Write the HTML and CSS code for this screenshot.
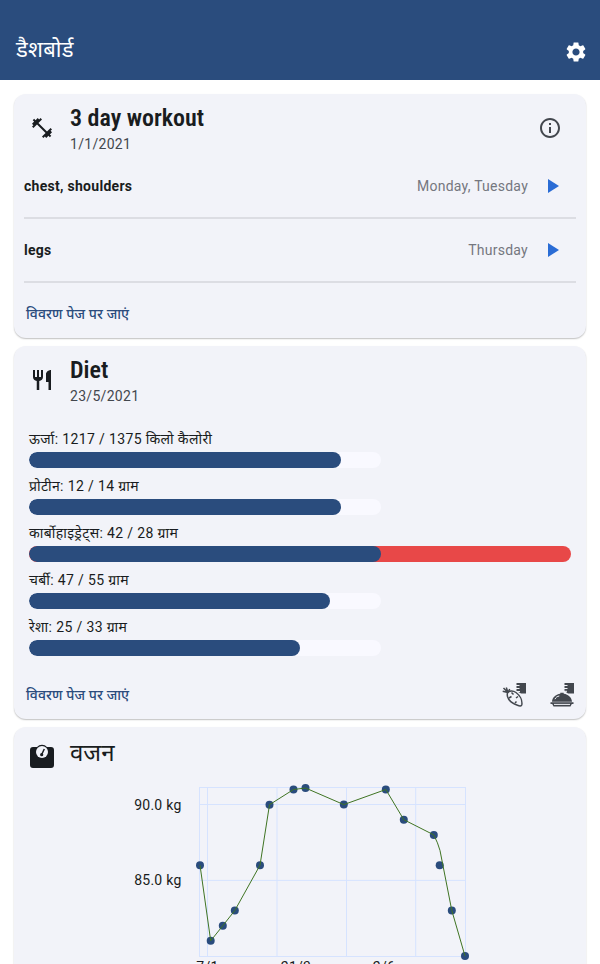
FILE: index.html
```html
<!DOCTYPE html>
<html lang="hi">
<head>
<meta charset="utf-8">
<title>डैशबोर्ड</title>
<link rel="stylesheet" href="styles.css">
</head>
<body>
<header class="appbar">
  <h1>डैशबोर्ड</h1>
  <svg class="icon" viewBox="0 0 24 24"><path d="M19.14 12.94c.04-.3.06-.61.06-.94 0-.32-.02-.64-.07-.94l2.03-1.58c.18-.14.23-.41.12-.61l-1.92-3.32c-.12-.22-.37-.29-.59-.22l-2.39.96c-.5-.38-1.03-.7-1.62-.94l-.36-2.54c-.04-.24-.24-.41-.48-.41h-3.84c-.24 0-.43.17-.47.41l-.36 2.54c-.59.24-1.13.57-1.62.94l-2.39-.96c-.22-.08-.47 0-.59.22L2.74 8.87c-.12.21-.08.47.12.61l2.03 1.58c-.05.3-.09.63-.09.94s.02.64.07.94l-2.03 1.58c-.18.14-.23.41-.12.61l1.92 3.32c.12.22.37.29.59.22l2.39-.96c.5.38 1.03.7 1.62.94l.36 2.54c.05.24.24.41.48.41h3.84c.24 0 .44-.17.47-.41l.36-2.54c.59-.24 1.13-.56 1.62-.94l2.39.96c.22.08.47 0 .59-.22l1.92-3.32c.12-.22.07-.47-.12-.61l-2.01-1.58zM12 15.6c-1.98 0-3.6-1.62-3.6-3.6s1.62-3.6 3.6-3.6 3.6 1.62 3.6 3.6-1.62 3.6-3.6 3.6z"/></svg>
</header>
<main class="cards">
  <section class="card workout">
    <div class="card-head">
      <svg class="icon" viewBox="0 0 24 24"><path d="M20.57 14.86L22 13.43 20.57 12 17 15.57 8.43 7 12 3.43 10.57 2 9.14 3.43 7.71 2 5.57 4.14 4.14 2.71 2.71 4.14l1.43 1.43L2 7.71l1.43 1.43L2 10.57 3.43 12 7 8.43 15.57 17 12 20.57 13.43 22l1.43-1.43L16.29 22l2.14-2.14 1.43 1.43 1.43-1.43-1.43-1.43L22 16.29z"/></svg>
      <div class="titles"><h2>3 day workout</h2><p>1/1/2021</p></div>
      <svg class="icon info" viewBox="0 0 24 24"><path d="M11 7h2v2h-2zm0 4h2v6h-2zm1-9C6.48 2 2 6.48 2 12s4.48 10 10 10 10-4.48 10-10S17.52 2 12 2zm0 18c-4.41 0-8-3.59-8-8s3.59-8 8-8 8 3.59 8 8-3.59 8-8 8z"/></svg>
    </div>
    <div class="day"><b>chest, shoulders</b><span>Monday, Tuesday</span><svg class="icon play" viewBox="0 0 24 24"><path d="M8 5v14l11-7z"/></svg></div>
    <div class="day"><b>legs</b><span>Thursday</span><svg class="icon play" viewBox="0 0 24 24"><path d="M8 5v14l11-7z"/></svg></div>
    <div class="actions"><a>विवरण पेज पर जाएं</a></div>
  </section>

  <section class="card diet">
    <div class="card-head">
      <svg class="icon" viewBox="0 0 24 24"><path d="M11 9H9V2H7v7H5V2H3v7c0 2.12 1.66 3.84 3.75 3.97V22h2.5v-9.03C11.34 12.84 13 11.12 13 9V2h-2v7zm5-3v8h2.5v8H21V2c-2.76 0-5 2.24-5 4z"/></svg>
      <div class="titles"><h2>Diet</h2><p>23/5/2021</p></div>
    </div>
    <div class="gauges">
      <div class="gauge"><p>ऊर्जा: 1217 / 1375 किलो कैलोरी</p><div class="track"><div class="fill" style="width:311.5px"></div></div></div>
      <div class="gauge"><p>प्रोटीन: 12 / 14 ग्राम</p><div class="track"><div class="fill" style="width:311.5px"></div></div></div>
      <div class="gauge"><p>कार्बोहाइड्रेट्स: 42 / 28 ग्राम</p><div class="track over"><div class="fill" style="width:352px"></div></div></div>
      <div class="gauge"><p>चर्बी: 47 / 55 ग्राम</p><div class="track"><div class="fill" style="width:301px"></div></div></div>
      <div class="gauge"><p>रेशा: 25 / 33 ग्राम</p><div class="track"><div class="fill" style="width:270.5px"></div></div></div>
    </div>
    <div class="actions">
      <a>विवरण पेज पर जाएं</a>
      <svg class="icon food" viewBox="0 0 24 24">
        <path class="solid" d="M14.500 0H24v10.500h-5L14.500 8z"/>
        <path class="gap" d="M14 2.500h3.500M14 5.500h3.500M14 8.500h4"/>
        <path class="outline base" d="M5.500 10C7 7.500 11 7.500 14 9.500c4 3 6.500 8 5.800 12.200-.4 1.600-2.300 1.400-4.300.6C10 20.500 6.500 17 5.500 13.500c-.3-1.500-.4-2.500 0-3.500z"/>
        <path class="outline" d="M6 9.500L.7 8.200M6 9.500L1.500 5M6 9.500L4.300 4.500M6 9.500l1.700-3.500M9.500 9.500l2 2M7 15l2.500-1.500M16 13.500l-2 1.500M13 20l1.500-1.500"/>
      </svg>
      <svg class="icon food" viewBox="0 0 24 24">
        <path class="solid" d="M14.500 0H24v10.500h-6L14.500 8z"/>
        <path class="gap" d="M14 2.500h3.500M14 5.500h3.500M14 8.300h3"/>
        <path class="solid" d="M2 18.800C2.300 14.500 5.500 11.500 10.300 10.800V9.800h3.400v1c4.800.7 8 3.700 8.300 8z"/>
        <path class="shine" d="M5 16.200c.8-1.900 2.300-2.900 4.300-3.200"/>
        <path class="solid" d="M.5 19.300h23v1.600h-1.700l-1.300 2.600h-17l-1.300-2.600H.5z"/>
        <path class="gap" d="M4 21.400h16"/>
      </svg>
    </div>
  </section>

  <section class="card weight">
    <div class="card-head">
      <svg class="icon" viewBox="0 0 24 24"><path d="M3 3h4a6.600 6.600 0 0 1 10 0h4a3 3 0 0 1 3 3v15a3 3 0 0 1-3 3H3a3 3 0 0 1-3-3V6a3 3 0 0 1 3-3z"/><circle class="dial" cx="12" cy="8" r="6"/><path class="needle" d="M11.700 10.500L14.300 5"/><circle cx="11.700" cy="10.700" r="1.600"/></svg>
      <div class="titles"><h2>वजन</h2></div>
    </div>
    <svg class="chart" viewBox="14 780 572 184">
      <path class="grid" d="M207.500 787V956M277 787V956M346.500 787V956M415.700 787V956M199.500 804.500H465.500M199.500 880.400H465.500"/>
      <rect class="frame" x="199.500" y="787.500" width="266" height="169"/>
      <g class="dots"><circle cx="200" cy="865.200" r="4"/><circle cx="210.700" cy="940.800" r="4"/><circle cx="222.800" cy="925.700" r="4"/><circle cx="234.800" cy="910.500" r="4"/><circle cx="260" cy="865.200" r="4"/><circle cx="269.500" cy="804.700" r="4"/><circle cx="293.500" cy="789.500" r="4"/><circle cx="305.500" cy="788" r="4"/><circle cx="343.800" cy="804.600" r="4"/><circle cx="385.800" cy="789.500" r="4"/><circle cx="403.800" cy="819.700" r="4"/><circle cx="433.800" cy="834.900" r="4"/><circle cx="439.700" cy="865.200" r="4"/><circle cx="451.800" cy="910.500" r="4"/><circle cx="465" cy="956" r="4"/></g>
      <path class="series" d="M200 865.200L210.700 940.800 222.800 925.700 234.800 910.500 260 865.200 269.500 804.700 293.500 789.500 305.500 788 343.800 804.600 385.800 789.500 403.800 819.700 433.800 834.900Q438 843 440 850.500L451.800 910.500 465 956"/>
      <g class="labels"><text x="181.500" y="810" text-anchor="end">90.0 kg</text><text x="181.500" y="885" text-anchor="end">85.0 kg</text><text x="207.500" y="972" text-anchor="middle">7/1</text><text x="296" y="972" text-anchor="middle">21/3</text><text x="384" y="972" text-anchor="middle">2/6</text></g>
    </svg>
  </section>
</main>
</body>
</html>
```
FILE: styles.css
```css
* { box-sizing: border-box; margin: 0; padding: 0; }
body {
  height: 964px;
  overflow: hidden;
  background: #fff;
  color: #191c20;
  font: 14px/20px Roboto, "Noto Sans Devanagari", "Noto Sans", sans-serif;
  letter-spacing: 0.25px;
}
.icon { width: 24px; height: 24px; flex: none; fill: currentColor; }
.appbar {
  height: 80px;
  padding: 24px 12px 0 16px;
  display: flex;
  align-items: center;
  justify-content: space-between;
  background: #2a4c7d;
  color: #fff;
}
.appbar h1 { font-size: 22px; font-weight: 400; letter-spacing: 0.250px; line-height: 28px; padding-bottom: 4px; }
.cards { height: 884px; padding: 14px 14px 0; display: flex; flex-direction: column; gap: 8px; }
.card {
  flex: none;
  border-radius: 12px;
  background: #f2f3f9;
  box-shadow: 0 1px 1.500px rgba(0, 0, 0, 0.25);
}
.workout { height: 244px; }
.diet { height: 373px; }
.weight { height: 237px; border-radius: 12px 12px 0 0; }
.card-head { display: flex; align-items: center; height: 68px; padding: 0 24px 0 16px; }
.titles { flex: 1; margin-left: 16px; }
.titles h2 {
  font-family: "Roboto Condensed", Roboto, "Noto Sans Devanagari", "Noto Sans", sans-serif;
  font-stretch: 75%;
  font-size: 24px;
  line-height: 32px;
  font-weight: 600;
  letter-spacing: 0;
}
.titles p { color: #43474e; letter-spacing: 0.3px; }
.info { color: #43474e; }
.workout .card-head { height: 62px; padding-top: 6px; }
.day {
  height: 64px;
  margin: 0 10px;
  padding-right: 12px;
  display: flex;
  align-items: center;
  border-bottom: 2px solid #dcdde3;
}
.day:nth-child(2) { height: 63px; padding-bottom: 2px; }
.day b { flex: 1; font-weight: 700; letter-spacing: 0.28px; }
.day span { color: #75777f; margin-right: 12px; }
.play { color: #2a6cd5; }
.actions { display: flex; align-items: center; height: 62px; padding: 0 12px; }
.actions a { flex: 1; color: #2a4c7d; font-weight: 500; letter-spacing: 0.130px; }
.gauges { padding: 15px 15px 0; }
.gauge { height: 47px; }
.gauge p { height: 23px; line-height: 20px; letter-spacing: 0.360px; white-space: nowrap; }
.track { width: 352px; height: 16px; border-radius: 8px; background: #f9f9ff; overflow: hidden; }
.over { width: 542px; background: #e84848; }
.fill { height: 16px; border-radius: 8px; background: #2a4c7d; }
.food { color: #43474e; }
.food + .food { margin-left: 24px; }
.outline { fill: none; stroke: #43474e; stroke-width: 1.500; }
.base { fill: #f2f3f9; }
.gap, .shine { fill: none; stroke: #f2f3f9; stroke-width: 1; }
.dial { fill: #f2f3f9; }
.needle { stroke: #191c20; stroke-width: 1.500; }
.weight .card-head { height: 53px; padding-top: 5px; }
.weight h2 { font-weight: 400; padding-bottom: 6px; }
.chart { display: block; width: 572px; height: 184px; overflow: hidden; }
.grid, .frame { fill: none; stroke: #d6e3ff; stroke-width: 1; }
.dots { fill: #2a4c7d; }
.series { fill: none; stroke: #3f7423; stroke-width: 1; }
.labels { fill: #191c20; font-size: 14px; letter-spacing: 0.25px; }
```
